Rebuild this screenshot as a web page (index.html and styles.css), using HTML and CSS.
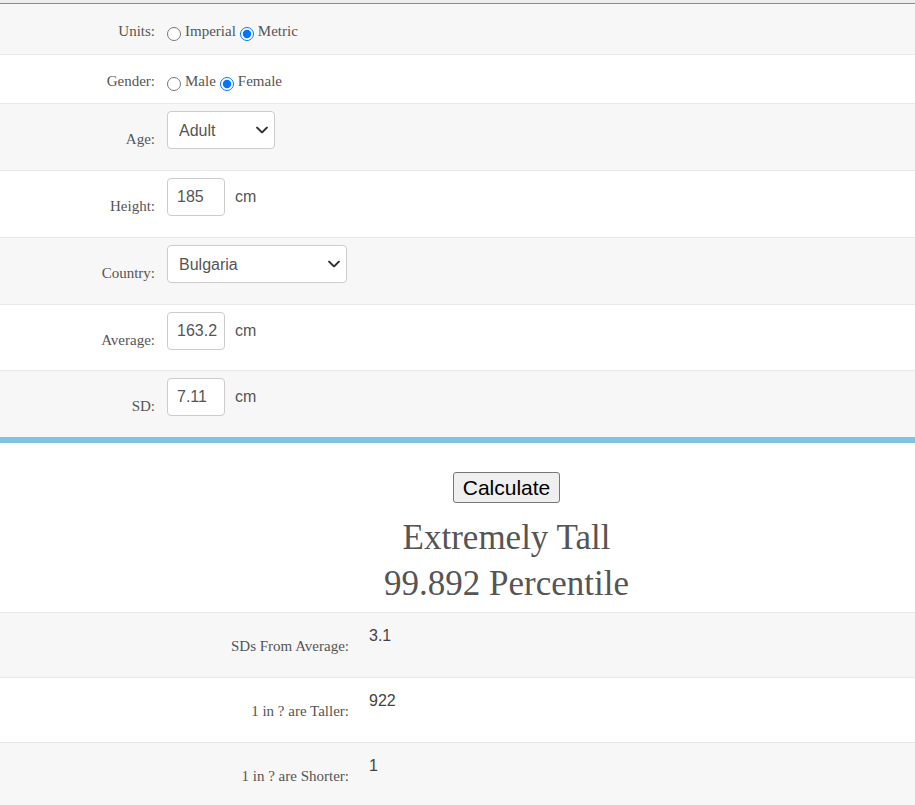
FILE: index.html
```html
<!DOCTYPE html>
<html lang="en">
<head>
<meta charset="utf-8">
<title>Height Percentile Calculator</title>
<link rel="stylesheet" href="styles.css">
</head>
<body>
<div class="topbar"></div>
<form class="calc">
  <div class="row choice alt">
    <span class="lbl">Units:</span>
    <div class="opts"><input type="radio" name="units" id="u-imp"><label for="u-imp">Imperial</label><input type="radio" name="units" id="u-met" checked><label for="u-met">Metric</label></div>
  </div>
  <div class="row choice">
    <span class="lbl">Gender:</span>
    <div class="opts"><input type="radio" name="gender" id="g-m"><label for="g-m">Male</label><input type="radio" name="gender" id="g-f" checked><label for="g-f">Female</label></div>
  </div>
  <div class="row field alt">
    <label class="lbl" for="age">Age:</label>
    <div class="ctrl">
      <span class="select-wrap">
        <select id="age" class="select w-age"><option>Adult</option></select>
        <svg class="chev" viewBox="0 0 12 7" width="12" height="7"><path d="M1 1l5 5 5-5" fill="none" stroke="#333" stroke-width="1.8" stroke-linecap="round" stroke-linejoin="round"/></svg>
      </span>
    </div>
  </div>
  <div class="row field">
    <label class="lbl" for="height">Height:</label>
    <div class="ctrl"><input id="height" class="num" type="text" value="185"><span class="unit">cm</span></div>
  </div>
  <div class="row field alt">
    <label class="lbl" for="country">Country:</label>
    <div class="ctrl">
      <span class="select-wrap">
        <select id="country" class="select w-country"><option>Bulgaria</option></select>
        <svg class="chev" viewBox="0 0 12 7" width="12" height="7"><path d="M1 1l5 5 5-5" fill="none" stroke="#333" stroke-width="1.8" stroke-linecap="round" stroke-linejoin="round"/></svg>
      </span>
    </div>
  </div>
  <div class="row field short">
    <label class="lbl" for="avg">Average:</label>
    <div class="ctrl"><input id="avg" class="num" type="text" value="163.2"><span class="unit">cm</span></div>
  </div>
  <div class="row field alt last">
    <label class="lbl" for="sd">SD:</label>
    <div class="ctrl"><input id="sd" class="num" type="text" value="7.11"><span class="unit">cm</span></div>
  </div>
</form>
<div class="rule"></div>
<section class="result">
  <button type="button" class="calc-btn">Calculate</button>
  <h2 class="verdict">Extremely Tall<br>99.892 Percentile</h2>
</section>
<div class="stats">
  <div class="srow alt"><span class="slbl">SDs From Average:</span><span class="sval">3.1</span></div>
  <div class="srow"><span class="slbl">1 in ? are Taller:</span><span class="sval">922</span></div>
  <div class="srow alt"><span class="slbl">1 in ? are Shorter:</span><span class="sval">1</span></div>
</div>
</body>
</html>
```
FILE: styles.css
```css
* {
  box-sizing: border-box;
}

body {
  margin: 0;
  background: #fff;
  color: #555;
  font-family: "Liberation Serif", "Times New Roman", serif;
  font-size: 15px;
}

.topbar {
  height: 4px;
  background: #eee;
  border-bottom: 1px solid #8c8c8c;
}

/* form rows */
.row {
  display: grid;
  grid-template-columns: 155px 1fr;
  column-gap: 12px;
  border-bottom: 1px solid #e8e8e8;
}

.alt {
  background: #f7f7f7;
}

.lbl {
  text-align: right;
  line-height: 20px;
}

.row.choice {
  align-items: baseline;
  padding-top: 17px;
  height: 51px;
}

.row.choice + .row.choice {
  height: 49px;
  padding-top: 16px;
}

.opts {
  line-height: 20px;
}

.opts input[type="radio"] {
  width: 14px;
  height: 14px;
  margin: 0 3px 0 4px;
  vertical-align: -5px;
}

.opts input[type="radio"]:first-child {
  margin-left: 0;
}

.opts label {
  margin-left: 1px;
}

.row.field {
  height: 67px;
  padding-top: 7px;
  align-items: start;
}

.row.field.short {
  height: 66px;
}

.row.field.last {
  height: 66px;
  border-bottom: 0;
}

.row.field .lbl {
  margin-top: 18px;
}

.ctrl {
  display: flex;
  align-items: center;
  gap: 10px;
  font-family: "Liberation Sans", Arial, sans-serif;
  font-size: 16px;
}

.num {
  width: 58px;
  height: 38px;
  padding: 0 0 0 9px;
  border: 1px solid #ccc;
  border-radius: 4px;
  background: #fff;
  color: #555;
  font: 16px "Liberation Sans", Arial, sans-serif;
}

.unit {
  color: #555;
}

.select-wrap {
  position: relative;
  display: inline-block;
}

.select {
  appearance: none;
  -webkit-appearance: none;
  height: 38px;
  padding: 0 30px 0 11px;
  border: 1px solid #ccc;
  border-radius: 4px;
  background: #fff;
  color: #555;
  font: 16px "Liberation Sans", Arial, sans-serif;
}

.w-age {
  width: 108px;
}

.w-country {
  width: 180px;
}

.chev {
  position: absolute;
  right: 7px;
  top: 50%;
  transform: translateY(-50%);
  pointer-events: none;
}

/* blue divider between inputs and results */
.rule {
  height: 6px;
  background: #7fc3e4;
}

.result {
  padding: 29px 0 0 98px;
  text-align: center;
}

.calc-btn {
  display: block;
  margin: 0 auto;
  height: 31px;
  padding: 0 9px;
  border: 1px solid #767676;
  border-radius: 3px;
  background: #efefef;
  color: #000;
  font: 21px "Liberation Sans", Arial, sans-serif;
}

.verdict {
  margin: 12px 0 5px;
  font-weight: normal;
  font-size: 35px;
  line-height: 46px;
  color: #555;
}

/* result table */
.stats {
  border-top: 1px solid #e8e8e8;
}

.srow {
  display: grid;
  grid-template-columns: 349px 1fr;
  column-gap: 20px;
  height: 65px;
  border-bottom: 1px solid #e8e8e8;
  align-items: start;
}

.srow:last-child {
  border-bottom: 0;
}

.slbl {
  text-align: right;
  line-height: 20px;
  margin-top: 23px;
}

.sval {
  margin-top: 13px;
  font: 16px/20px "Liberation Sans", Arial, sans-serif;
  color: #444;
}
```
